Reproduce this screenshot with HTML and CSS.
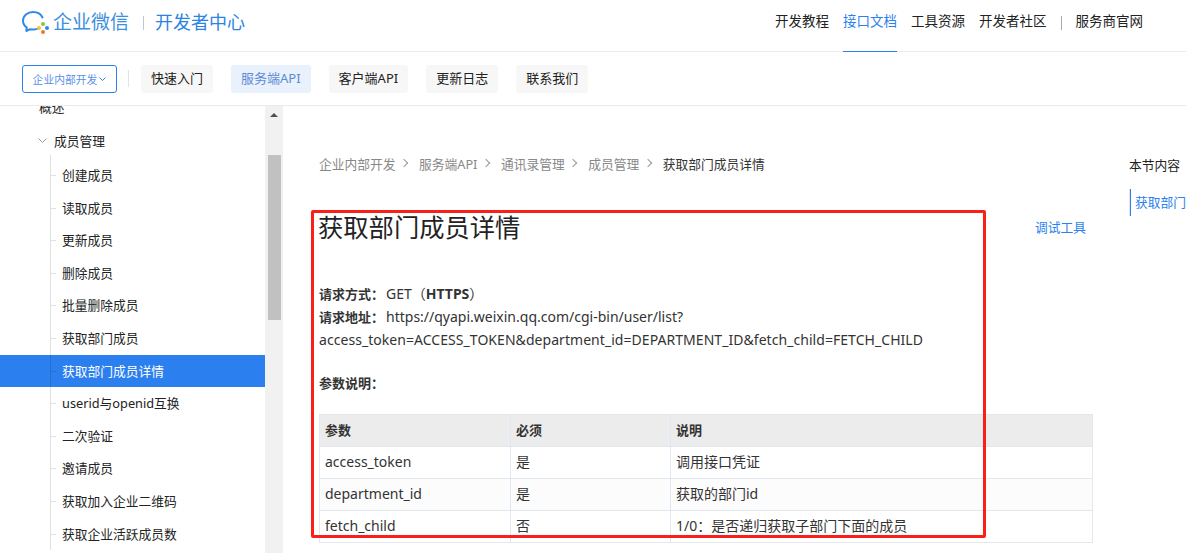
FILE: index.html
```html
<!DOCTYPE html>
<html>
<head>
    <title>获取部门成员详情</title>
    <link rel="stylesheet" href="styles.css">
</head>
<body>
    <header class="topbar">
        <div class="brand">
            <svg class="brand-icon" width="28" height="26" viewBox="0 0 28 26">
                <path d="M20.5 6.500C19 3 15.300 1 11 1C5.500 1 1 4.700 1 9.800C1 12.700 2.500 15 4.800 16.600L4.300 20L8.200 18.200C9.300 18.500 10.400 18.600 11.500 18.600C12.800 18.600 14.100 18.300 15.200 17.900" fill="none" stroke="#2d8ae6" stroke-width="2" stroke-linecap="round" stroke-linejoin="round"/>
                <circle cx="21" cy="13" r="2" fill="#8ac43f"/>
                <circle cx="25" cy="17" r="2" fill="#2d8ae6"/>
                <circle cx="21" cy="21" r="2" fill="#f0762a"/>
                <circle cx="17" cy="17" r="2" fill="#f7c32e"/>
            </svg>
            <span class="brand-name">企业微信</span>
            <span class="brand-sep"></span>
            <span class="brand-sub">开发者中心</span>
        </div>
        <nav class="topnav">
            <a class="topnav-link">开发教程</a>
            <a class="topnav-link active">接口文档</a>
            <a class="topnav-link">工具资源</a>
            <a class="topnav-link">开发者社区</a>
            <span class="topnav-sep"></span>
            <a class="topnav-link">服务商官网</a>
        </nav>
    </header>

    <div class="subbar">
        <button class="scope">企业内部开发<svg width="7" height="4" viewBox="0 0 7 4"><path d="M.5.5l3 3 3-3" fill="none" stroke="#2b7fef"/></svg></button>
        <span class="subbar-sep"></span>
        <a class="tab">快速入门</a>
        <a class="tab active">服务端API</a>
        <a class="tab">客户端API</a>
        <a class="tab">更新日志</a>
        <a class="tab">联系我们</a>
    </div>

    <div class="page">
        <aside class="sidebar">
            <div class="tree">
                <div class="tree-top">概述</div>
                <div class="tree-group"><svg width="9" height="5" viewBox="0 0 9 5"><path d="M.5.5l4 4 4-4" fill="none" stroke="#999"/></svg>成员管理</div>
                <ul class="tree-list">
                    <li>创建成员</li>
                    <li>读取成员</li>
                    <li>更新成员</li>
                    <li>删除成员</li>
                    <li>批量删除成员</li>
                    <li>获取部门成员</li>
                    <li class="active">获取部门成员详情</li>
                    <li>userid与openid互换</li>
                    <li>二次验证</li>
                    <li>邀请成员</li>
                    <li>获取加入企业二维码</li>
                    <li>获取企业活跃成员数</li>
                </ul>
            </div>
            <div class="scrollbar">
                <span class="scroll-up"></span>
                <span class="scroll-thumb"></span>
            </div>
        </aside>

        <main class="content">
            <div class="crumbs">
                <a>企业内部开发</a><i></i>
                <a>服务端API</a><i></i>
                <a>通讯录管理</a><i></i>
                <a>成员管理</a><i></i>
                <span>获取部门成员详情</span>
            </div>
            <div class="title-row">
                <h1>获取部门成员详情</h1>
                <a class="debug">调试工具</a>
            </div>
            <p class="doc-text">
                <b class="label">请求方式：</b>GET（<b>HTTPS</b>）<br>
                <b class="label">请求地址：</b>https://qyapi.weixin.qq.com/cgi-bin/user/list?<br>
                <span class="doc-query">access_token=ACCESS_TOKEN&amp;department_id=DEPARTMENT_ID&amp;fetch_child=FETCH_CHILD</span>
            </p>
            <p class="doc-text params"><b class="label">参数说明：</b></p>
            <table class="params-table">
                <tr><th class="col-a">参数</th><th class="col-b">必须</th><th>说明</th></tr>
                <tr><td>access_token</td><td>是</td><td>调用接口凭证</td></tr>
                <tr><td>department_id</td><td>是</td><td>获取的部门id</td></tr>
                <tr><td>fetch_child</td><td>否</td><td>1/0：是否递归获取子部门下面的成员</td></tr>
            </table>
        </main>

        <aside class="toc">
            <div class="toc-title">本节内容</div>
            <a class="toc-link">获取部门成员详情</a>
        </aside>
    </div>

    <div class="red-box"></div>
</body>
</html>
```

FILE: styles.css
```css
html, body {
    height: 553px;
    margin: 0;
    overflow: hidden;
}
body {
    background-color: #fff;
    color: #333;
    font-family: "Noto Sans", "Noto Sans CJK SC", sans-serif;
    font-size: 12.75px;
}
a {
    color: inherit;
    text-decoration: none;
}

.topbar {
    display: flex;
    justify-content: space-between;
    height: 51px;
    border-bottom: 1px solid #ebebeb;
    padding: 0 43px 0 22px;
}
.brand {
    display: flex;
    align-items: center;
    margin-top: -6px;
}
.brand-icon {
    margin: 2px 3px 0 0;
}
.brand-name {
    color: #3d8fe0;
    font-size: 19px;
    margin-bottom: 4px;
}
.brand-sep {
    width: 1px;
    height: 14px;
    margin: 0 11px 0 14px;
    background-color: #b9c9da;
}
.brand-sub {
    color: #2b84e4;
    font-size: 18px;
    margin-bottom: 4px;
}
.topnav {
    display: flex;
    align-items: stretch;
    gap: 14px;
}
.topnav-link {
    height: 44px;
    line-height: 42px;
    font-size: 13.5px;
    color: #222;
    margin-bottom: -1px;
    padding-bottom: 7px;
}
.topnav-link.active {
    color: #2b7fef;
    border-bottom: 1px solid #2b7fef;
}
.topnav-sep {
    width: 1px;
    height: 14px;
    margin-top: 16px;
    background-color: #aaa;
}

.subbar {
    display: flex;
    align-items: center;
    gap: 18px;
    height: 54px;
    border-bottom: 1px solid #ebebeb;
    padding: 0 0 0 22px;
    box-sizing: border-box;
}
.scope {
    display: flex;
    align-items: center;
    justify-content: center;
    gap: 2px;
    width: 95px;
    height: 28px;
    padding: 0;
    margin-right: -7px;
    background-color: #fff;
    border: 1px solid #2b7fef;
    border-radius: 3px;
    color: #5b8fe8;
    font-family: inherit;
    font-size: 10.8px;
}
.subbar-sep {
    width: 1px;
    height: 17px;
    margin-right: -6px;
    background-color: #e3e3e3;
}
.tab {
    height: 28px;
    line-height: 26px;
    padding: 0 10px;
    background-color: #f7f7f7;
    border-radius: 3px;
    color: #222;
    font-size: 13px;
}
.tab.active {
    background-color: #e9f1fc;
    color: #5a8bd6;
}

.page {
    display: flex;
    height: 447px;
}
.sidebar {
    display: flex;
    flex: none;
    width: 283px;
    overflow: hidden;
}
.tree {
    flex: none;
    width: 265px;
    margin-top: -15px;
    color: #222;
}
.tree-top {
    height: 32.600px;
    line-height: 32.600px;
    padding-left: 39px;
}
.tree-group {
    display: flex;
    align-items: center;
    gap: 7px;
    height: 33px;
    margin-bottom: 2.500px;
    padding-left: 38px;
}
.tree-list {
    list-style: none;
    margin: 0;
    padding: 0;
    position: relative;
}
.tree-list li {
    position: relative;
    height: 32.600px;
    line-height: 32.600px;
    padding-left: 62px;
}
.tree-list::before {
    content: "";
    position: absolute;
    z-index: 1;
    left: 50px;
    top: -4px;
    bottom: 0;
    width: 1px;
    background-color: rgba(0, 0, 0, 0.12);
}
.tree-list li::before {
    content: "";
    position: absolute;
    left: 51px;
    top: 16px;
    width: 5px;
    height: 1px;
    background-color: rgba(0, 0, 0, 0.12);
}
.tree-list li.active {
    background-color: #2b7fef;
    color: #fff;
}
.scrollbar {
    flex: none;
    width: 18px;
    background-color: #f1f1f1;
    display: flex;
    flex-direction: column;
    align-items: center;
}
.scroll-up {
    width: 0;
    height: 0;
    margin-top: 7px;
    border: 4px solid transparent;
    border-top: 0;
    border-bottom: 4px solid #505050;
}
.scroll-thumb {
    width: 13px;
    height: 165px;
    margin-top: 38px;
    background-color: #c1c1c1;
}

.content {
    flex: none;
    width: 774px;
    padding-left: 36px;
}
.crumbs {
    display: flex;
    align-items: center;
    margin-top: 47px;
    height: 20px;
    color: #888;
}
.crumbs i {
    width: 5px;
    height: 5px;
    margin: 0 12px 0 5.500px;
    border-top: 1px solid #999;
    border-right: 1px solid #999;
    transform: rotate(45deg);
}
.crumbs span {
    color: #333;
}
.title-row {
    display: flex;
    justify-content: space-between;
    margin-top: 36px;
}
h1 {
    margin: 0 0 0 -1px;
    font-size: 25.300px;
    font-weight: normal;
    line-height: 36px;
    color: #222;
}
.debug {
    margin: 8px 7px 0 0;
    color: #2b7fef;
}
.doc-text {
    margin: 37px 0 0;
    line-height: 23px;
    font-size: 14px;
}
.doc-text b {
    line-height: 1;
}
.doc-text .label {
    margin-right: 2px;
    font-size: 13px;
}
.doc-query {
    letter-spacing: 0.05px;
}
.doc-text.params {
    margin-top: 20px;
}
.params-table {
    width: 774px;
    margin-top: 20px;
    border-collapse: collapse;
    table-layout: fixed;
    font-size: 14px;
}
.params-table th, .params-table td {
    height: 28px;
    padding: 0 5px 3px;
    border: 1px solid #e1e7ee;
    text-align: left;
}
.params-table th {
    background-color: #ececec;
    font-size: 13px;
}
.params-table tr:nth-child(3) td {
    background-color: #fcfcfc;
}
.col-a {
    width: 180px;
}
.col-b {
    width: 149px;
}

.toc {
    flex: none;
    width: 57px;
    margin-left: 36px;
    overflow: hidden;
    white-space: nowrap;
}
.toc-title {
    margin-top: 49px;
    height: 20px;
    line-height: 20px;
    color: #222;
}
.toc-link {
    display: block;
    margin-top: 14px;
    height: 27px;
    line-height: 27px;
    padding-left: 5px;
    border-left: 1px solid #e6e6e6;
    box-shadow: inset 1px 0 0 #2b7fef;
    color: #2b7fef;
}

.red-box {
    position: absolute;
    left: 311px;
    top: 210px;
    width: 669px;
    height: 322px;
    border: 3px solid #f9201a;
    border-radius: 2px;
}
```
